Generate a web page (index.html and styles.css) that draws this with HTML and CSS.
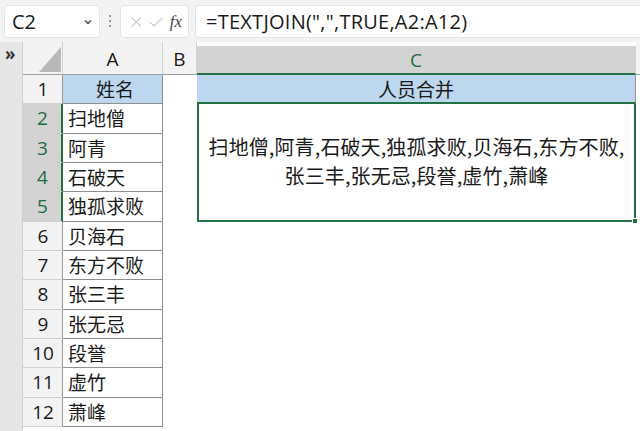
FILE: index.html
```html
<!DOCTYPE html>
<html>
	<head>
		<meta charset="UTF-8">
		<title>TEXTJOIN</title>
		<link rel="stylesheet" href="styles.css">
	</head>
	<body>
		<!-- 编辑栏 -->
		<div class="bar">
			<div class="name-box">
				<span>C2</span>
				<svg class="chev" width="8" height="6" viewBox="0 0 8 6"><path d="M1 1.5 L4 4.5 L7 1.5" fill="none" stroke="#444" stroke-width="1.3"/></svg>
			</div>
			<div class="dots"><i></i><i></i><i></i></div>
			<div class="fx-box">
				<svg width="16" height="16" viewBox="0 0 16 16"><path d="M2 2 L14 14 M14 2 L2 14" stroke="#c4c4c4" stroke-width="1.3"/></svg>
				<svg width="18" height="16" viewBox="0 0 18 16"><path d="M1 8 L6 13 L17 3" fill="none" stroke="#c4c4c4" stroke-width="1.3"/></svg>
				<span class="fx">fx</span>
			</div>
			<div class="formula">=TEXTJOIN(",",TRUE,A2:A12)</div>
		</div>

		<div class="main">
			<div class="strip">»</div>
			<div class="sheet">
				<!-- 列标 -->
				<div class="corner">
					<svg width="22" height="25" viewBox="0 0 22 25"><polygon points="22,0 22,25 0,25" fill="#b9b9b9"/></svg>
				</div>
				<div class="col-hd">A</div>
				<div class="col-hd">B</div>
				<div class="col-hd sel">C</div>
				<div class="col-hd end"></div>

				<!-- 第1行 -->
				<div class="row-hd">1</div>
				<div class="cell a title">姓名</div>
				<div class="cell b"></div>
				<div class="cell c title">人员合并</div>
				<div class="cell end"></div>

				<div class="row-hd sel">2</div>
				<div class="cell a">扫地僧</div>
				<div class="cell b"></div>
				<div class="cell merged">扫地僧,阿青,石破天,独孤求败,贝海石,东方不败,<br>张三丰,张无忌,段誉,虚竹,萧峰<span class="handle"></span></div>
				<div class="cell end"></div>

				<div class="row-hd sel">3</div>
				<div class="cell a">阿青</div>
				<div class="cell b"></div>
				<div class="cell end"></div>

				<div class="row-hd sel">4</div>
				<div class="cell a">石破天</div>
				<div class="cell b"></div>
				<div class="cell end"></div>

				<div class="row-hd sel">5</div>
				<div class="cell a">独孤求败</div>
				<div class="cell b"></div>
				<div class="cell end"></div>

				<div class="row-hd">6</div>
				<div class="cell a">贝海石</div>
				<div class="cell b"></div>
				<div class="cell c"></div>
				<div class="cell end"></div>

				<div class="row-hd">7</div>
				<div class="cell a">东方不败</div>
				<div class="cell b"></div>
				<div class="cell c"></div>
				<div class="cell end"></div>

				<div class="row-hd">8</div>
				<div class="cell a">张三丰</div>
				<div class="cell b"></div>
				<div class="cell c"></div>
				<div class="cell end"></div>

				<div class="row-hd">9</div>
				<div class="cell a">张无忌</div>
				<div class="cell b"></div>
				<div class="cell c"></div>
				<div class="cell end"></div>

				<div class="row-hd">10</div>
				<div class="cell a">段誉</div>
				<div class="cell b"></div>
				<div class="cell c"></div>
				<div class="cell end"></div>

				<div class="row-hd">11</div>
				<div class="cell a">虚竹</div>
				<div class="cell b"></div>
				<div class="cell c"></div>
				<div class="cell end"></div>

				<div class="row-hd">12</div>
				<div class="cell a">萧峰</div>
				<div class="cell b"></div>
				<div class="cell c"></div>
				<div class="cell end"></div>
			</div>
		</div>
	</body>
</html>
```

FILE: styles.css
```css
*{
	margin: 0;
	padding: 0;
	box-sizing: border-box;
}
body{
	width: 640px;
	height: 431px;
	overflow: hidden;
	background: #f3f3f3;
	font-family: "Open Sans", "Noto Sans CJK SC", sans-serif;
	color: #1a1a1a;
}
.bar{
	height: 42px;
	display: flex;
	align-items: flex-start;
	padding: 5px 0 0 4px;
}
.name-box,.fx-box,.formula{
	height: 33px;
	background: #fff;
	border: 1px solid #e4e4e4;
	border-radius: 4px;
	display: flex;
	align-items: center;
}
.name-box{
	width: 96px;
	padding: 0 7px 0 7px;
	justify-content: space-between;
	font-size: 20px;
}
.dots{
	width: 20px;
	display: flex;
	flex-direction: column;
	align-items: center;
	gap: 3px;
	padding-top: 10px;
}
.dots i{
	width: 2px;
	height: 2px;
	background: #9a9a9a;
}
.fx-box{
	width: 69px;
	padding: 0 6px 0 9px;
	gap: 6px;
}
.fx{
	font-family: "Liberation Serif", serif;
	font-style: italic;
	font-size: 17px;
	color: #444;
	margin-left: 1px;
}
.formula{
	flex: 1;
	margin-left: 6px;
	border-right: none;
	border-radius: 4px 0 0 4px;
	padding-left: 10px;
	font-size: 20px;
	letter-spacing: 0.25px;
}
.main{
	display: flex;
	height: 389px;
}
.strip{
	width: 23px;
	background: #e6e6e6;
	border-right: 1px solid #cfcfcf;
	font-size: 17px;
	font-weight: bold;
	line-height: 24px;
	padding-left: 5px;
	color: #333;
}
.sheet{
	flex: 1;
	display: grid;
	grid-template-columns: 40px 100px 34px 439px 1fr;
	grid-template-rows: 33px repeat(12, 29.33px);
	background: #fff;
}
.corner{
	background: #f3f3f3;
	border-right: 1px solid #d2d2d2;
	border-bottom: 1px solid #9c9c9c;
	display: flex;
	align-items: flex-end;
	justify-content: flex-end;
	padding: 0 1px 2px 0;
}
.col-hd{
	background: #f3f3f3;
	border-right: 1px solid #d2d2d2;
	border-bottom: 1px solid #9c9c9c;
	font-size: 19px;
	text-align: center;
	line-height: 33px;
	padding-top: 1px;
}
.col-hd.sel{
	background: #d3d3d3;
	color: #1e6b41;
	border-bottom: 2px solid #217346;
	margin-top: 4px;
	line-height: 26px;
}
.col-hd.end{
	border-right: none;
}
.row-hd{
	background: #f3f3f3;
	border-right: 1px solid #9c9c9c;
	border-bottom: 1px solid #d2d2d2;
	font-size: 19px;
	text-align: center;
	line-height: 28px;
	padding-left: 1px;
}
.row-hd.sel{
	background: #d3d3d3;
	color: #1e6b41;
	border-right: 2px solid #217346;
}
.cell{
	font-family: "Noto Sans CJK SC", sans-serif;
	font-size: 19px;
	line-height: 28px;
}
.cell.a{
	border-right: 1px solid #8f8f8f;
	border-bottom: 1px solid #8f8f8f;
	padding-left: 5px;
}
.title{
	background: #bdd7ee;
	text-align: center;
}
.cell.c.title{
	border-right: 1px solid #9c9c9c;
	border-bottom: 2px solid #217346;
}
.merged{
	grid-row: 3 / span 4;
	grid-column: 4;
	position: relative;
	border: 2px solid #217346;
	border-top: none;
	display: flex;
	align-items: center;
	justify-content: center;
	text-align: center;
	font-size: 20px;
	line-height: 29px;
	padding-bottom: 2px;
	letter-spacing: 0.1px;
}
.handle{
	position: absolute;
	right: -4px;
	bottom: -4px;
	width: 6px;
	height: 6px;
	background: #217346;
	border: 1px solid #fff;
}
```
